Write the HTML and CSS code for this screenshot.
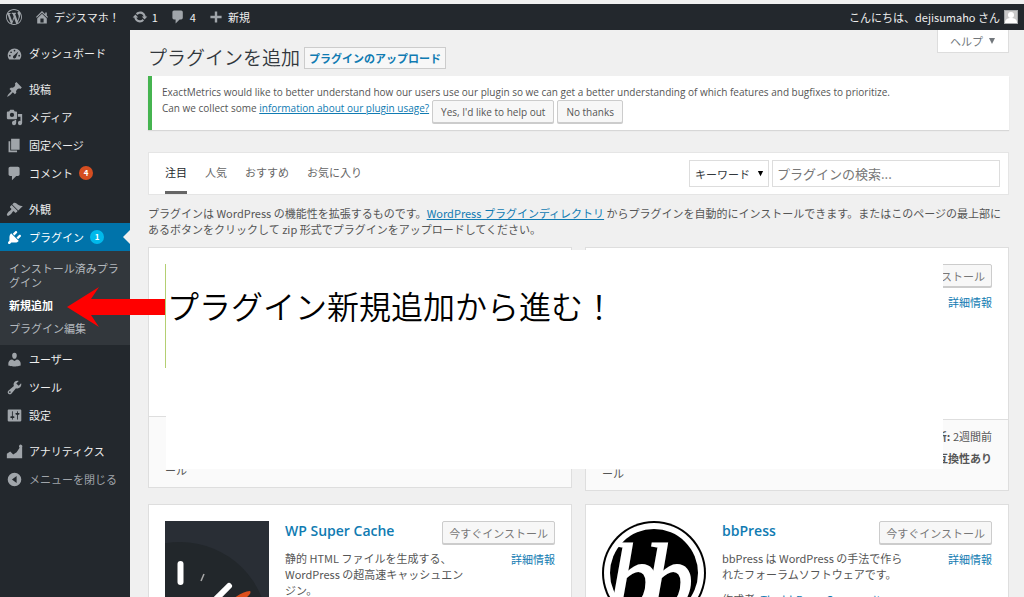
FILE: index.html
```html
<!DOCTYPE html>
<html lang="ja">
<head>
<meta charset="utf-8">
<title>プラグインを追加</title>
<link rel="stylesheet" href="styles.css">
</head>
<body>
<header class="adminbar">
  <nav class="bar-group" aria-label="ツールバー">
    <a class="bar-item" href="#" aria-label="WordPress"><svg viewBox="0 0 20 20"><path d="M20 10c0-5.51-4.49-10-10-10C4.48 0 0 4.49 0 10c0 5.52 4.48 10 10 10 5.51 0 10-4.48 10-10zM7.78 15.37L4.37 6.22c.55-.02 1.17-.08 1.17-.08.5-.06.44-1.13-.06-1.11 0 0-1.45.11-2.37.11-.18 0-.37 0-.58-.01C4.12 2.69 6.87 1.11 10 1.11c2.33 0 4.45.87 6.05 2.34-.68-.11-1.65.39-1.65 1.58 0 .74.45 1.36.9 2.1.35.61.55 1.36.55 2.46 0 1.49-1.4 5-1.4 5l-3.03-8.37c.54-.02.82-.17.82-.17.5-.05.44-1.25-.06-1.22 0 0-1.44.12-2.38.12-.87 0-2.33-.12-2.33-.12-.5-.03-.56 1.2-.06 1.22l.92.08 1.26 3.41zM17.41 10c.24-.64.74-1.87.43-4.25.7 1.29 1.05 2.71 1.05 4.25 0 3.29-1.73 6.24-4.4 7.78.97-2.59 1.94-5.2 2.92-7.78zM6.1 18.09C3.12 16.65 1.11 13.53 1.11 10c0-1.3.23-2.48.72-3.59C3.25 10.3 4.67 14.2 6.1 18.09zm4.03-6.63l2.58 6.98c-.86.29-1.76.45-2.71.45-.79 0-1.57-.11-2.29-.33.81-2.38 1.62-4.74 2.42-7.1z"/></svg></a>
    <a class="bar-item" href="#"><svg viewBox="0 0 20 20"><path d="M16 8.5l1.53 1.53-1.06 1.06L10 4.6l-6.47 6.49-1.06-1.06L10 2.5l4 4v-2h2v4zm-6-2.46l6 5.99V18H4v-5.97zM12 17v-5H8v5h4z"/></svg>デジスマホ！</a>
    <a class="bar-item" href="#"><svg viewBox="0 0 20 20"><path d="M10.2 3.28c3.53 0 6.43 2.61 6.92 6h2.08l-3.5 4-3.5-4h2.32c-.45-1.97-2.21-3.45-4.32-3.45-1.45 0-2.73.71-3.54 1.78L4.95 5.66C6.23 4.2 8.11 3.28 10.2 3.28zm-.4 13.44c-3.52 0-6.43-2.61-6.92-6H.8l3.5-4c1.17 1.33 2.33 2.67 3.5 4H5.48c.45 1.97 2.21 3.45 4.32 3.45 1.45 0 2.73-.71 3.54-1.78l1.71 1.95c-1.28 1.46-3.15 2.38-5.25 2.38z"/></svg>1</a>
    <a class="bar-item" href="#"><svg viewBox="0 0 20 20"><path d="M5 2h9c1.1 0 2 .9 2 2v7c0 1.1-.9 2-2 2h-2l-5 5v-5H5c-1.1 0-2-.9-2-2V4c0-1.1.9-2 2-2z"/></svg>4</a>
    <a class="bar-item" href="#"><svg viewBox="0 0 20 20"><path d="M17 8.500v3h-5.500v5.500h-3v-5.500H3v-3h5.500V3h3v5.500z"/></svg>新規</a>
  </nav>
  <a class="bar-item" href="#">こんにちは、dejisumaho さん<svg class="avatar" viewBox="0 0 14 14"><rect width="14" height="14" fill="#c8c8c8"/><circle cx="7" cy="5" r="3" fill="#fff"/><path d="M1 13c0-4 3-5 6-5s6 1 6 5z" fill="#fff"/><rect x=".5" y=".5" width="13" height="13" fill="none" stroke="#a5a8aa"/></svg></a>
</header>

<div class="layout">
  <nav class="sidebar" aria-label="メインメニュー">
    <ul class="menu">
      <li><a class="menu-item" href="#"><svg viewBox="0 0 20 20"><path fill-rule="evenodd" d="M3.760 17h12.480c1.100-1.380 1.760-3.110 1.760-5 0-4.420-3.580-8-8-8s-8 3.580-8 8c0 1.890.66 3.620 1.760 5zM10 5.500a1 1 0 1 1 0 2 1 1 0 0 1 0-2zM6 7.500a1 1 0 1 1 0 2 1 1 0 0 1 0-2zM4.500 11.500a1 1 0 1 1 0 2 1 1 0 0 1 0-2zM15.500 11.500a1 1 0 1 1 0 2 1 1 0 0 1 0-2zM14.500 7.500l-2.700 7c-.4 1.300-1.800 1.700-2.800 1-1-.8-1-2.200-.1-2.900z"/></svg>ダッシュボード</a></li>
      <li class="group-start"><a class="menu-item" href="#"><svg viewBox="0 0 20 20"><path d="M10.440 3.020l1.820-1.820 6.360 6.350-1.830 1.820c-1.050-.68-2.480-.57-3.410.36l-.75.75c-.92.93-1.040 2.350-.35 3.410l-1.830 1.820-2.410-2.410-2.800 2.790c-.42.42-3.380 2.710-3.800 2.290s1.860-3.390 2.280-3.810l2.790-2.790L4.100 9.360l1.830-1.820c1.050.69 2.480.57 3.400-.36l.75-.75c.93-.92 1.050-2.350.36-3.410z"/></svg>投稿</a></li>
      <li><a class="menu-item" href="#"><svg viewBox="0 0 20 20"><path fill-rule="evenodd" d="M13 11V4c0-.55-.45-1-1-1h-1.670L9 1H5L3.670 3H2c-.55 0-1 .45-1 1v7c0 .55.45 1 1 1h10c.55 0 1-.45 1-1zM7 4.500a2.500 2.500 0 1 1 0 5 2.500 2.500 0 0 1 0-5zM14 6h5v10.500a2.500 2.500 0 1 1-2-2.450V9h-3zM10 14.050V13h2v3.500a2.500 2.500 0 1 1-2-2.450z"/></svg>メディア</a></li>
      <li><a class="menu-item" href="#"><svg viewBox="0 0 20 20"><path d="M6 15V2h10v13H6zm-1 1h8v2H3V5h2v11z"/></svg>固定ページ</a></li>
      <li><a class="menu-item" href="#"><svg viewBox="0 0 20 20"><path d="M5 2h9c1.1 0 2 .9 2 2v7c0 1.1-.9 2-2 2h-2l-5 5v-5H5c-1.1 0-2-.9-2-2V4c0-1.1.9-2 2-2z"/></svg>コメント<span class="badge">4</span></a></li>
      <li class="group-start"><a class="menu-item" href="#"><svg viewBox="0 0 20 20"><path d="M14.480 11.060L7.410 3.990l1.500-1.500c.5-.56 2.300-.47 3.510.32 1.210.8 1.430 1.280 2.910 2.100 1.180.64 2.450 1.260 4.450.85zm-.71.71L6.700 4.700 4.930 6.470c-.39.39-.39 1.020 0 1.410l1.060 1.060c.39.39.39 1.030 0 1.420-.6.6-1.430 1.110-2.210 1.690-.35.26-.7.53-1.010.84C1.430 14.230.4 16.080 1.400 17.070c.99 1 2.840-.03 4.180-1.360.31-.31.58-.66.85-1.020.57-.78 1.080-1.610 1.690-2.210.39-.39 1.020-.39 1.410 0l1.060 1.060c.39.39 1.020.39 1.410 0z"/></svg>外観</a></li>
      <li>
        <a class="menu-item current" href="#"><svg viewBox="0 0 20 20"><path d="M13.110 4.360L9.870 7.600 8 5.730l3.240-3.240c.35-.34 1.050-.2 1.560.32.52.51.66 1.210.31 1.550zm-8 1.770l.91-1.120 9.010 9.010-1.190.84c-.71.71-2.630 1.160-3.820 1.160H6.140L4.900 17.260c-.59.59-1.540.59-2.120 0-.59-.58-.59-1.530 0-2.120l1.240-1.240v-3.880c0-1.130.4-3.190 1.090-3.890zm7.260 3.970l3.240-3.240c.34-.35 1.040-.21 1.550.31.52.51.66 1.210.31 1.550l-3.240 3.250z"/></svg>プラグイン<span class="badge badge-blue">1</span></a>
        <ul class="submenu">
          <li><a href="#">インストール済みプラグイン</a></li>
          <li><a class="active" href="#">新規追加</a></li>
          <li><a href="#">プラグイン編集</a></li>
        </ul>
      </li>
      <li><a class="menu-item" href="#"><svg viewBox="0 0 20 20"><path d="M10 9.250c-2.270 0-2.730-3.440-2.730-3.440C7 4.020 7.820 2 9.970 2c2.160 0 2.980 2.020 2.710 3.810 0 0-.41 3.440-2.680 3.440zm0 2.570L12.720 10c2.390 0 4.520 2.330 4.520 4.530v2.490s-3.650 1.130-7.240 1.130c-3.650 0-7.240-1.130-7.240-1.130v-2.490c0-2.250 1.940-4.480 4.470-4.480z"/></svg>ユーザー</a></li>
      <li><a class="menu-item" href="#"><svg viewBox="0 0 20 20"><path d="M16.680 9.770c-1.340 1.340-3.300 1.670-4.950.99l-5.410 6.520c-.99.99-2.590.99-3.580 0s-.99-2.590 0-3.570l6.520-5.420c-.68-1.650-.35-3.610.99-4.950 1.280-1.280 3.120-1.620 4.720-1.060l-2.890 2.890 2.820 2.820 2.860-2.870c.53 1.580.18 3.390-1.080 4.650zM3.810 16.210c.4.39 1.040.39 1.430 0 .4-.4.4-1.040 0-1.430-.39-.4-1.030-.4-1.430 0-.39.39-.39 1.030 0 1.430z"/></svg>ツール</a></li>
      <li><a class="menu-item" href="#"><svg viewBox="0 0 20 20"><path d="M18 16V4c0-.55-.45-1-1-1H3c-.55 0-1 .45-1 1v12c0 .55.45 1 1 1h14c.55 0 1-.45 1-1zM8 11h1c.55 0 1 .45 1 1s-.45 1-1 1H8v1.500c0 .28-.22.5-.5.5s-.5-.22-.5-.5V13H6c-.55 0-1-.45-1-1s.45-1 1-1h1V5.500c0-.28.22-.5.5-.5s.5.22.5.5V11zm5-2h-1c-.55 0-1-.45-1-1s.45-1 1-1h1V5.500c0-.28.22-.5.5-.5s.5.22.5.5V7h1c.55 0 1 .45 1 1s-.45 1-1 1h-1v5.500c0 .28-.22.5-.5.5s-.5-.22-.5-.5V9z"/></svg>設定</a></li>
      <li class="group-start"><a class="menu-item" href="#"><svg viewBox="0 0 20 20"><path d="M1 18v-5.500l4-2.500 3.500 3.500 4-2.500 3.500-5.500A2 2 0 1 1 19 5v13z"/></svg>アナリティクス</a></li>
      <li><button class="menu-item collapse" type="button"><svg viewBox="0 0 20 20"><path fill-rule="evenodd" d="M10 2a8 8 0 1 1 0 16 8 8 0 0 1 0-16zM12.500 6L7 10l5.500 4z"/></svg>メニューを閉じる</button></li>
    </ul>
  </nav>

  <main class="content">
    <div class="title-row">
      <h1>プラグインを追加</h1>
      <a class="upload" href="#">プラグインのアップロード</a>
      <button class="help" type="button">ヘルプ<svg viewBox="0 0 8 8"><path d="M1 1h6L4 7z"/></svg></button>
    </div>

    <section class="notice">
      <p>ExactMetrics would like to better understand how our users use our plugin so we can get a better understanding of which features and bugfixes to prioritize.</p>
      <div class="notice-row">
        <span>Can we collect some <a href="#">information about our plugin usage?</a></span>
        <button class="button" type="button">Yes, I'd like to help out</button>
        <button class="button" type="button">No thanks</button>
      </div>
    </section>

    <section class="filter">
      <nav class="tabs" aria-label="絞り込み">
        <a class="tab selected" href="#">注目</a>
        <a class="tab" href="#">人気</a>
        <a class="tab" href="#">おすすめ</a>
        <a class="tab" href="#">お気に入り</a>
      </nav>
      <form class="search">
        <div class="select-wrap">
          <select aria-label="検索の種類"><option>キーワード</option><option>作成者</option><option>タグ</option></select>
          <svg viewBox="0 0 8 8"><path d="M1 1h6L4 7z"/></svg>
        </div>
        <input type="search" aria-label="プラグインの検索" placeholder="プラグインの検索...">
      </form>
    </section>

    <p class="intro">プラグインは WordPress の機能性を拡張するものです。<a href="#">WordPress プラグインディレクトリ</a> からプラグインを自動的にインストールできます。またはこのページの最上部にあるボタンをクリックして zip 形式でプラグインをアップロードしてください。</p>

    <div class="cards">
      <article class="card">
        <div class="card-top tall"><div class="thumb thumb-green"></div></div>
        <div class="card-foot"><div>ール</div></div>
      </article>
      <article class="card">
        <div class="card-top taller">
          <div class="thumb"></div>
          <div class="summary"></div>
          <div class="actions"><button class="button muted" type="button">今すぐインストール</button><a href="#">詳細情報</a></div>
        </div>
        <div class="card-foot">
          <div>ール</div>
          <div class="meta"><span><strong>最終更新:</strong> 2週間前</span><strong>互換性あり</strong></div>
        </div>
      </article>
      <article class="card">
        <div class="card-top">
          <svg class="thumb" viewBox="0 0 104 104"><rect width="104" height="104" fill="#292e35"/><circle cx="15" cy="109" r="88" fill="#22272b"/><path d="M15.500 43v18" stroke="#fff" stroke-width="6" stroke-linecap="round"/><path d="M36 60l3-7" stroke="#aaa" stroke-width="1.500"/><path d="M64 65L40 89" stroke="#fff" stroke-width="6" stroke-linecap="round"/><path d="M85 70q2 2-4 7L50 100l12-17q13-12 23-13z" fill="#dd4f1b"/></svg>
          <div class="summary"><h2><a href="#">WP Super Cache</a></h2><p>静的 HTML ファイルを生成する、WordPress の超高速キャッシュエンジン。</p></div>
          <div class="actions"><button class="button muted" type="button">今すぐインストール</button><a href="#">詳細情報</a></div>
        </div>
      </article>
      <article class="card">
        <div class="card-top">
          <svg class="thumb" viewBox="0 0 104 104"><circle cx="52" cy="52" r="52"/><circle cx="52" cy="52" r="50" fill="#fff"/><circle cx="52" cy="52" r="44"/><g class="bb"><text x="7" y="90">b</text><text x="42" y="90">b</text></g></svg>
          <div class="summary"><h2><a href="#">bbPress</a></h2><p>bbPress は WordPress の手法で作られたフォーラムソフトウェアです。</p><p class="author">作成者: <a href="#">The bbPress Community</a></p></div>
          <div class="actions"><button class="button muted" type="button">今すぐインストール</button><a href="#">詳細情報</a></div>
        </div>
      </article>

      <div class="callout">プラグイン新規追加から進む！</div>
      <svg class="arrow" viewBox="0 0 98 40"><path d="M0 20L32 0 24 12H98V28H24L32 40z" fill="#f00"/></svg>
    </div>
  </main>
</div>
</body>
</html>
```
FILE: styles.css
```css
* { box-sizing: border-box; }

body {
  margin: 0;
  height: 100vh;
  overflow: hidden;
  display: flex;
  flex-direction: column;
  border-top: 4px solid #f0f0f0;
  background: #f0f0f0;
  color: #555;
  font: 11px/16px "Noto Sans CJK JP", sans-serif;
}

h1, h2, p, ul { margin: 0; padding: 0; }
ul { list-style: none; }
a { color: #107bb2; }
button, input, select { font: inherit; }
svg { flex: none; }

.adminbar {
  display: flex;
  justify-content: space-between;
  flex: none;
  height: 26px;
  padding: 0 6px;
  background: #23282d;
}
.bar-group { display: flex; gap: 12px; }
.bar-item {
  display: flex;
  align-items: center;
  gap: 4px;
  color: #eee;
  text-decoration: none;
}
.bar-item svg { width: 16px; height: 16px; fill: #a0a5aa; }
.bar-item .avatar { width: 14px; height: 14px; }

.layout { display: flex; flex: 1; min-height: 0; }

.sidebar {
  flex: none;
  width: 130px;
  padding-top: 9px;
  background: #23282d;
}
.menu-item {
  display: flex;
  align-items: center;
  position: relative;
  width: 100%;
  height: 28px;
  padding: 0 6px;
  gap: 6px;
  border: 0;
  background: none;
  color: #eee;
  text-decoration: none;
}
.menu-item svg { width: 17px; height: 17px; fill: #a0a5aa; }
.group-start { margin-top: 8px; }
.menu-item.current { background: #0073aa; color: #fff; }
.menu-item.current svg { fill: #fff; }
.menu-item.current::after {
  content: "";
  position: absolute;
  right: 0;
  top: 7px;
  border: 7px solid transparent;
  border-left-width: 0;
  border-right-color: #f0f0f0;
}
.menu-item.collapse { color: #a0a5aa; }
.badge {
  width: 14px;
  height: 14px;
  border-radius: 7px;
  background: #d54e21;
  color: #fff;
  font-size: 8px;
  font-weight: 600;
  line-height: 14px;
  text-align: center;
}
.badge-blue { background: #00b9eb; }
.submenu { padding: 6px 9px 5px; background: #32373c; }
.submenu a {
  display: block;
  padding: 4px 0 5px;
  color: #b4b9be;
  line-height: 14px;
  text-decoration: none;
}
.submenu .active { color: #fff; font-weight: 700; }

.content { flex: 1; min-width: 0; padding: 0 15px 0 18px; }

.title-row { display: flex; align-items: flex-start; gap: 4px; height: 46px; }
h1 {
  padding-top: 15px;
  color: #32373c;
  font-size: 19px;
  font-weight: 350;
  line-height: 24px;
}
.upload {
  margin-top: 17px;
  padding: 2px 4px;
  border: 1px solid #ccc;
  background: #f7f7f7;
  font-weight: 700;
  text-decoration: none;
}
.help {
  display: flex;
  align-items: center;
  gap: 5px;
  height: 23px;
  margin-left: auto;
  padding: 0 12px;
  border: 1px solid #ddd;
  border-top: 0;
  background: #fff;
  color: #72777c;
}
.help svg { width: 8px; height: 8px; fill: #72777c; }

.notice {
  padding: 8px 10px 7px;
  border-left: 4px solid #46b450;
  background: #fff;
  box-shadow: 0 1px 1px rgba(0, 0, 0, .1);
  font-family: "Open Sans", sans-serif;
  font-size: 10px;
}
.notice-row { display: flex; align-items: flex-start; gap: 3px; }
.button {
  height: 23px;
  padding: 0 6px;
  border: 1px solid #ccc;
  border-radius: 2px;
  background: #f7f7f7;
  box-shadow: 0 1px 0 #ccc;
  color: #555;
  white-space: nowrap;
}
.button.muted { color: #777; }
.notice .button { padding: 0 8px; }

.filter {
  display: flex;
  justify-content: space-between;
  height: 43px;
  margin-top: 22px;
  padding: 0 8px 0 16px;
  border: 1px solid #e5e5e5;
  background: #fff;
}
.tabs { display: flex; gap: 18px; }
.tab {
  padding-top: 11px;
  border-bottom: 3px solid transparent;
  color: #666;
  text-decoration: none;
}
.tab.selected { border-color: #666; color: #23282d; }
.search { display: flex; gap: 3px; align-items: center; }
.select-wrap { position: relative; width: 80px; }
.select-wrap select {
  appearance: none;
  width: 100%;
  height: 27px;
  padding: 0 5px;
  border: 1px solid #ddd;
  border-radius: 0;
  background: #fff;
  color: #32373c;
}
.select-wrap svg {
  position: absolute;
  right: 5px;
  top: 10px;
  width: 7px;
  height: 7px;
  pointer-events: none;
}
.search input {
  width: 228px;
  height: 27px;
  padding: 0 4px;
  border: 1px solid #ddd;
  font-size: 13px;
}
.search input::placeholder { color: #777; }

.intro { margin: 10px 0; }

.cards {
  position: relative;
  display: grid;
  grid-template-columns: 1fr 1fr;
  align-items: start;
  gap: 13px;
}
.card { border: 1px solid #dedede; background: #fff; }
.card-top { display: flex; gap: 16px; padding: 16px; }
.card-top.tall { height: 168px; }
.card-top.taller { height: 171px; }
.thumb { flex: none; width: 104px; height: 104px; }
.thumb-green { background: #b4cf72; }
.bb {
  fill: #fff;
  stroke: #fff;
  stroke-width: 2px;
  font: italic 400 98px "Liberation Serif", serif;
}
.summary { flex: 1; min-width: 0; }
.summary h2 {
  margin-bottom: 10px;
  padding-top: 1px;
  font: 600 14px/18px "Open Sans", "Noto Sans CJK JP", sans-serif;
}
.summary h2 a { text-decoration: none; }
.summary p { margin-right: -48px; padding-right: 3px; }
.summary .author { margin-top: 9px; }
.actions {
  display: flex;
  flex-direction: column;
  align-items: flex-end;
  gap: 7px;
}
.actions a, .author a { text-decoration: none; }
.card-foot {
  display: flex;
  justify-content: space-between;
  height: 71px;
  padding: 8px 16px 9px;
  border-top: 1px solid #dedede;
  background: #fafafa;
}
.card-foot > div:first-child { align-self: flex-end; }
.meta { display: flex; flex-direction: column; align-items: flex-end; gap: 6px; }

.callout {
  position: absolute;
  left: 18px;
  right: 66px;
  top: 3px;
  height: 219px;
  padding: 31px 0 0 1px;
  background: #fff;
  color: #000;
  font-size: 32px;
  font-weight: 350;
  line-height: 48px;
}
.arrow { position: absolute; left: -81px; top: 40px; width: 98px; height: 40px; }
```
